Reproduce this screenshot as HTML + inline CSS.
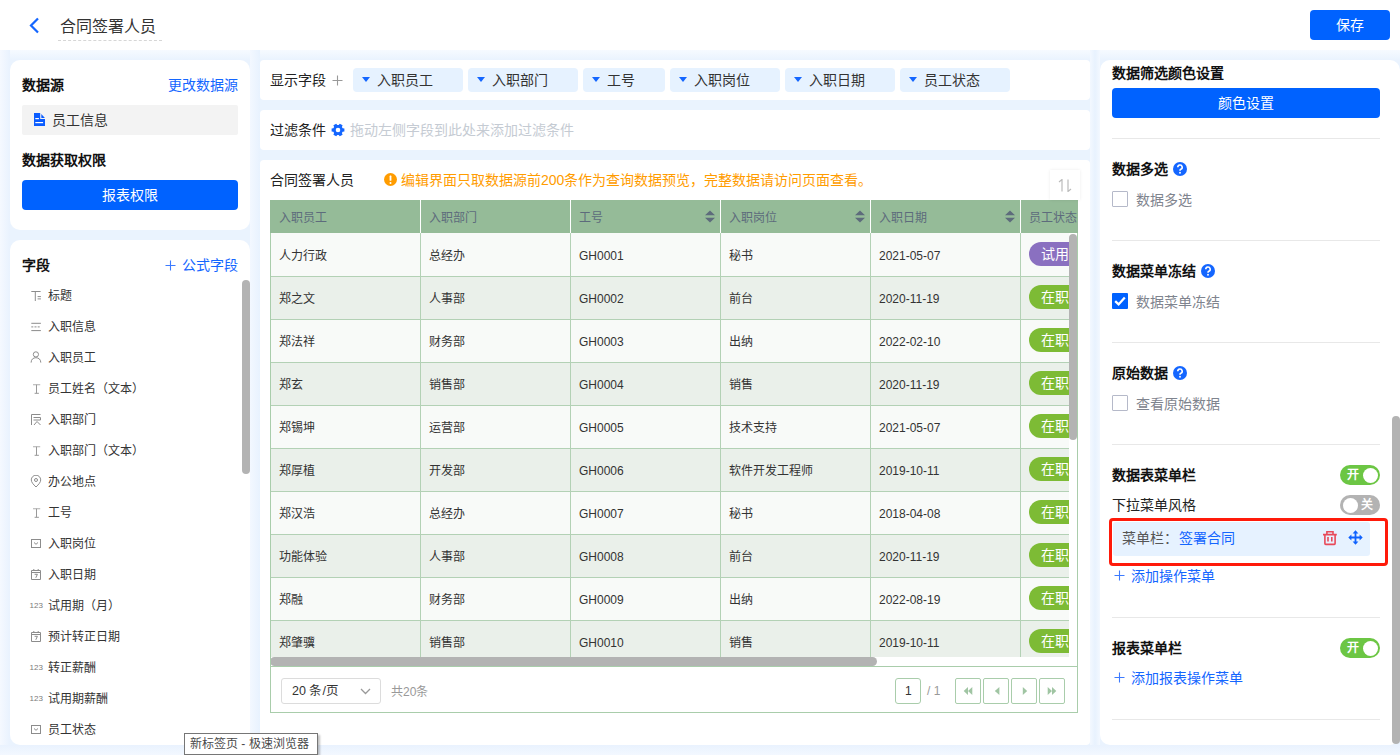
<!DOCTYPE html>
<html lang="zh-CN"><head><meta charset="utf-8">
<style>
*{box-sizing:border-box;margin:0;padding:0}
html,body{width:1400px;height:755px;overflow:hidden}
body{font-family:"Liberation Sans",sans-serif;font-size:14px;color:#222;background:#eaf3fe;position:relative}
.abs{position:absolute}
.hdr{left:0;top:0;width:1400px;height:50px;background:#fff}
.card{background:#fff;border-radius:10px}
.t{position:absolute;white-space:nowrap;line-height:1}
.b{font-weight:bold;color:#111}
.blue{color:#1466ff}
.btn{position:absolute;background:#0062ff;color:#fff;border-radius:4px;text-align:center;font-size:14px}
</style></head><body>

<!-- header -->
<div class="abs hdr">
  <svg class="abs" style="left:28px;top:17px" width="13" height="17" viewBox="0 0 13 17"><path d="M10 1.5 L3 8.5 L10 15.5" fill="none" stroke="#1466ff" stroke-width="2.2"/></svg>
  <div class="t" style="left:60px;top:19px;font-size:16px;color:#333">合同签署人员</div>
  <div class="abs" style="left:58px;top:40px;width:104px;border-top:1px dashed #d6d6d6"></div>
  <div class="btn" style="left:1310px;top:10px;width:80px;height:30px;line-height:30px">保存</div>
</div>

<div class="abs" style="left:0;top:50px;width:1400px;height:10px;background:linear-gradient(#f6faff,#eaf3fe)"></div>
<div class="abs" style="left:0;top:50px;width:10px;height:705px;background:linear-gradient(to right,#f5f9ff,#e9f2fe)"></div>
<div class="abs" style="left:250px;top:50px;width:10px;height:705px;background:linear-gradient(to right,#f3f8ff,#e8f2fe)"></div>
<div class="abs" style="left:1090px;top:50px;width:10px;height:705px;background:linear-gradient(to right,#f3f8ff,#e8f2fe 50%,#f3f8ff)"></div>
<div class="abs" style="left:0;top:745px;width:1400px;height:10px;background:linear-gradient(#e9f2fe,#f3f8ff)"></div>
<!-- left card 1 -->
<div class="abs card" style="left:10px;top:60px;width:240px;height:170px"></div>
<div class="t b" style="left:22px;top:78px">数据源</div>
<div class="t blue" style="left:168px;top:78px">更改数据源</div>
<div class="abs" style="left:22px;top:105px;width:216px;height:30px;background:#f3f3f3;border-radius:2px"></div>
<svg class="abs" style="left:34px;top:113px" width="11" height="13" viewBox="0 0 11 13"><path d="M0 0H6.2V6.1H11V13H0Z" fill="#0a5cff"/><path d="M7.3 1L10.9 5.1H7.3Z" fill="#0a5cff"/><rect x="1.3" y="5" width="3.6" height="1.2" fill="#fff"/><rect x="1.3" y="9" width="7.8" height="1.2" fill="#fff"/></svg>
<div class="t" style="left:52px;top:113px;color:#333">员工信息</div>
<div class="t b" style="left:22px;top:153px">数据获取权限</div>
<div class="btn" style="left:22px;top:180px;width:216px;height:30px;line-height:30px">报表权限</div>

<!-- left card 2 -->
<div class="abs card" style="left:10px;top:240px;width:240px;height:505px"></div>
<div class="t b" style="left:22px;top:258px">字段</div>
<svg class="abs" style="left:164.5px;top:259.5px" width="11" height="11" viewBox="0 0 11 11"><path d="M5.5 0.5V10.5M0.5 5.5H10.5" stroke="#3d7bff" stroke-width="1.1"/></svg>
<div class="t blue" style="left:182px;top:258px">公式字段</div>
<div class="abs" style="left:242px;top:280px;width:8px;height:194px;background:#b3b3b3;border-radius:4px"></div>
<svg class="abs" style="left:30px;top:289px" width="12" height="12" viewBox="0 0 12 12"><path d="M1.3 2.5H10.6M5.3 2.5V12M7.6 7.6H10.9M7.6 9.9H10.9" stroke="#8c8c8c" stroke-width="1" fill="none"/></svg>
<div class="t" style="left:48px;top:290px;font-size:12px;color:#333">标题</div>
<svg class="abs" style="left:30px;top:320px" width="12" height="12" viewBox="0 0 12 12"><path d="M1.3 3.3H10.9M1.3 10.6H10.9" stroke="#8c8c8c" stroke-width="1" fill="none"/><path d="M1.3 6.9H10.9" stroke="#8c8c8c" stroke-width="1" stroke-dasharray="2 1.2" fill="none"/></svg>
<div class="t" style="left:48px;top:321px;font-size:12px;color:#333">入职信息</div>
<svg class="abs" style="left:30px;top:351px" width="12" height="12" viewBox="0 0 12 12"><circle cx="5.9" cy="3.4" r="2.6" stroke="#8c8c8c" fill="none"/><path d="M1.1 11.6C1.1 8.4 3.2 6.7 5.9 6.7S10.8 8.4 10.8 11.6" stroke="#8c8c8c" fill="none"/></svg>
<div class="t" style="left:48px;top:352px;font-size:12px;color:#333">入职员工</div>
<svg class="abs" style="left:30px;top:382px" width="12" height="12" viewBox="0 0 12 12"><path d="M3 2.7H10.2" stroke="#bbb" stroke-width="1.2" fill="none"/><path d="M6.5 2.7V11.3M4.6 11.3H8.9" stroke="#999" fill="none"/></svg>
<div class="t" style="left:48px;top:383px;font-size:12px;color:#333">员工姓名（文本）</div>
<svg class="abs" style="left:30px;top:413px" width="12" height="12" viewBox="0 0 12 12"><path d="M1.5 1.5H10.5M1.5 1.5V12M3.5 4.5H10.5V7H3.5M4 12L7 8.5L10.5 12" stroke="#8c8c8c" fill="none"/></svg>
<div class="t" style="left:48px;top:414px;font-size:12px;color:#333">入职部门</div>
<svg class="abs" style="left:30px;top:444px" width="12" height="12" viewBox="0 0 12 12"><path d="M3 2.7H10.2" stroke="#bbb" stroke-width="1.2" fill="none"/><path d="M6.5 2.7V11.3M4.6 11.3H8.9" stroke="#999" fill="none"/></svg>
<div class="t" style="left:48px;top:445px;font-size:12px;color:#333">入职部门（文本）</div>
<svg class="abs" style="left:30px;top:475px" width="12" height="12" viewBox="0 0 12 12"><path d="M6 12C3.2 9.3 1.3 7.2 1.3 4.9A4.7 4.7 0 0 1 10.7 4.9C10.7 7.2 8.8 9.3 6 12Z" stroke="#8c8c8c" fill="none"/><circle cx="6" cy="5" r="1.5" stroke="#8c8c8c" fill="none"/></svg>
<div class="t" style="left:48px;top:476px;font-size:12px;color:#333">办公地点</div>
<svg class="abs" style="left:30px;top:506px" width="12" height="12" viewBox="0 0 12 12"><path d="M3 2.7H10.2" stroke="#bbb" stroke-width="1.2" fill="none"/><path d="M6.5 2.7V11.3M4.6 11.3H8.9" stroke="#999" fill="none"/></svg>
<div class="t" style="left:48px;top:507px;font-size:12px;color:#333">工号</div>
<svg class="abs" style="left:30px;top:537px" width="12" height="12" viewBox="0 0 12 12"><rect x="1.5" y="2.5" width="9" height="8" stroke="#8c8c8c" fill="none"/><path d="M4 5.5L6 7.3L8 5.5" stroke="#8c8c8c" fill="none"/></svg>
<div class="t" style="left:48px;top:538px;font-size:12px;color:#333">入职岗位</div>
<svg class="abs" style="left:30px;top:568px" width="12" height="12" viewBox="0 0 12 12"><path d="M1.5 2.5H10.5V11.5H1.5ZM1.5 4.5H10.5M3.8 1V3M8.2 1V3M4.6 6.3H7.4L5.8 9.8" stroke="#8c8c8c" fill="none"/></svg>
<div class="t" style="left:48px;top:569px;font-size:12px;color:#333">入职日期</div>
<div class="t" style="left:29.5px;top:601.5px;font-size:8px;color:#7a7a7a">123</div>
<div class="t" style="left:48px;top:600px;font-size:12px;color:#333">试用期（月）</div>
<svg class="abs" style="left:30px;top:630px" width="12" height="12" viewBox="0 0 12 12"><path d="M1.5 2.5H10.5V11.5H1.5ZM1.5 4.5H10.5M3.8 1V3M8.2 1V3M4.6 6.3H7.4L5.8 9.8" stroke="#8c8c8c" fill="none"/></svg>
<div class="t" style="left:48px;top:631px;font-size:12px;color:#333">预计转正日期</div>
<div class="t" style="left:29.5px;top:663.5px;font-size:8px;color:#7a7a7a">123</div>
<div class="t" style="left:48px;top:662px;font-size:12px;color:#333">转正薪酬</div>
<div class="t" style="left:29.5px;top:694.5px;font-size:8px;color:#7a7a7a">123</div>
<div class="t" style="left:48px;top:693px;font-size:12px;color:#333">试用期薪酬</div>
<svg class="abs" style="left:30px;top:723px" width="12" height="12" viewBox="0 0 12 12"><rect x="1.5" y="2.5" width="9" height="8" stroke="#8c8c8c" fill="none"/><path d="M4 5.5L6 7.3L8 5.5" stroke="#8c8c8c" fill="none"/></svg>
<div class="t" style="left:48px;top:724px;font-size:12px;color:#333">员工状态</div>

<!-- middle -->
<div class="abs card" style="left:260px;top:60px;width:830px;height:40px;border-radius:4px"></div>
<div class="t" style="left:270px;top:73px">显示字段</div>
<svg class="abs" style="left:331.5px;top:75px" width="11" height="11" viewBox="0 0 11 11"><path d="M5.5 0.5V10.5M0.5 5.5H10.5" stroke="#999" stroke-width="1.1"/></svg>
<div class="abs" style="left:353px;top:68px;width:110px;height:24px;background:#e6f2ff;border-radius:4px"></div>
<svg class="abs" style="left:362px;top:77px" width="8" height="5" viewBox="0 0 8 5"><path d="M0 0H8L4 5Z" fill="#1466ff"/></svg>
<div class="t" style="left:377px;top:73px;color:#333">入职员工</div>
<div class="abs" style="left:468px;top:68px;width:110px;height:24px;background:#e6f2ff;border-radius:4px"></div>
<svg class="abs" style="left:477px;top:77px" width="8" height="5" viewBox="0 0 8 5"><path d="M0 0H8L4 5Z" fill="#1466ff"/></svg>
<div class="t" style="left:492px;top:73px;color:#333">入职部门</div>
<div class="abs" style="left:583px;top:68px;width:82px;height:24px;background:#e6f2ff;border-radius:4px"></div>
<svg class="abs" style="left:592px;top:77px" width="8" height="5" viewBox="0 0 8 5"><path d="M0 0H8L4 5Z" fill="#1466ff"/></svg>
<div class="t" style="left:607px;top:73px;color:#333">工号</div>
<div class="abs" style="left:670px;top:68px;width:110px;height:24px;background:#e6f2ff;border-radius:4px"></div>
<svg class="abs" style="left:679px;top:77px" width="8" height="5" viewBox="0 0 8 5"><path d="M0 0H8L4 5Z" fill="#1466ff"/></svg>
<div class="t" style="left:694px;top:73px;color:#333">入职岗位</div>
<div class="abs" style="left:785px;top:68px;width:110px;height:24px;background:#e6f2ff;border-radius:4px"></div>
<svg class="abs" style="left:794px;top:77px" width="8" height="5" viewBox="0 0 8 5"><path d="M0 0H8L4 5Z" fill="#1466ff"/></svg>
<div class="t" style="left:809px;top:73px;color:#333">入职日期</div>
<div class="abs" style="left:900px;top:68px;width:110px;height:24px;background:#e6f2ff;border-radius:4px"></div>
<svg class="abs" style="left:909px;top:77px" width="8" height="5" viewBox="0 0 8 5"><path d="M0 0H8L4 5Z" fill="#1466ff"/></svg>
<div class="t" style="left:924px;top:73px;color:#333">员工状态</div>

<div class="abs card" style="left:260px;top:110px;width:830px;height:40px;border-radius:4px"></div>
<div class="t" style="left:270px;top:123px">过滤条件</div>
<svg class="abs" style="left:330.6px;top:123px" width="14" height="14" viewBox="0 0 14 14"><path d="M11.64 5.13 L13.40 5.40 L13.40 8.60 L11.64 8.87 L10.94 10.08 L11.58 11.75 L8.82 13.34 L7.70 11.95 L6.30 11.95 L5.18 13.34 L2.42 11.75 L3.06 10.08 L2.36 8.87 L0.60 8.60 L0.60 5.40 L2.36 5.13 L3.06 3.92 L2.42 2.25 L5.18 0.66 L6.30 2.05 L7.70 2.05 L8.82 0.66 L11.58 2.25 L10.94 3.92Z M9.3 7 A2.3 2.3 0 1 0 4.7 7 A2.3 2.3 0 1 0 9.3 7Z" fill="#1466ff" fill-rule="evenodd"/></svg>
<div class="t" style="left:350px;top:123px;color:#c5cbd3">拖动左侧字段到此处来添加过滤条件</div>

<div class="abs card" style="left:260px;top:160px;width:830px;height:585px;border-radius:4px"></div>
<div class="t" style="left:270px;top:173px">合同签署人员</div>
<svg class="abs" style="left:384px;top:173px" width="13" height="13" viewBox="0 0 13 13"><circle cx="6.5" cy="6.5" r="6.5" fill="#ff9c00"/><rect x="5.6" y="2.6" width="1.8" height="5.2" rx="0.6" fill="#fff"/><circle cx="6.5" cy="9.9" r="1" fill="#fff"/></svg>
<div class="t" style="left:401px;top:173px;color:#ff9c00">编辑界面只取数据源前200条作为查询数据预览，完整数据请访问页面查看。</div>

<div class="abs" style="left:270px;top:200px;width:808px;height:466px;overflow:hidden">
<div class="abs" style="left:0;top:0;width:808px;height:33px;background:#95bb98"></div>
<div class="t" style="left:9px;top:12px;font-size:12px;color:#5d6b7c">入职员工</div>
<div class="abs" style="left:150px;top:0;width:1px;height:33px;background:#fff"></div>
<div class="t" style="left:159px;top:12px;font-size:12px;color:#5d6b7c">入职部门</div>
<div class="abs" style="left:300px;top:0;width:1px;height:33px;background:#fff"></div>
<div class="t" style="left:309px;top:12px;font-size:12px;color:#5d6b7c">工号</div>
<svg class="abs" style="left:435px;top:10px" width="10" height="13" viewBox="0 0 10 13"><path d="M0 5.2L5 0.5L10 5.2Z M0 7.8L5 12.5L10 7.8Z" fill="#5d6b7c"/></svg>
<div class="abs" style="left:450px;top:0;width:1px;height:33px;background:#fff"></div>
<div class="t" style="left:459px;top:12px;font-size:12px;color:#5d6b7c">入职岗位</div>
<svg class="abs" style="left:585px;top:10px" width="10" height="13" viewBox="0 0 10 13"><path d="M0 5.2L5 0.5L10 5.2Z M0 7.8L5 12.5L10 7.8Z" fill="#5d6b7c"/></svg>
<div class="abs" style="left:600px;top:0;width:1px;height:33px;background:#fff"></div>
<div class="t" style="left:609px;top:12px;font-size:12px;color:#5d6b7c">入职日期</div>
<svg class="abs" style="left:735px;top:10px" width="10" height="13" viewBox="0 0 10 13"><path d="M0 5.2L5 0.5L10 5.2Z M0 7.8L5 12.5L10 7.8Z" fill="#5d6b7c"/></svg>
<div class="abs" style="left:750px;top:0;width:1px;height:33px;background:#fff"></div>
<div class="t" style="left:759px;top:12px;font-size:12px;color:#5d6b7c">员工状态</div>
<div class="abs" style="left:0;top:33px;width:799px;height:44px;background:#f8faf8;border-bottom:1px solid #b3d1b5"></div>
<div class="t" style="left:9px;top:50px;font-size:12px;color:#333">人力行政</div>
<div class="t" style="left:159px;top:50px;font-size:12px;color:#333">总经办</div>
<div class="t" style="left:309px;top:50px;font-size:12px;color:#333">GH0001</div>
<div class="t" style="left:459px;top:50px;font-size:12px;color:#333">秘书</div>
<div class="t" style="left:609px;top:50px;font-size:12px;color:#333">2021-05-07</div>
<div class="abs" style="left:759px;top:42px;width:70px;height:24px;border-radius:12px;background:#8a70c0"></div>
<div class="t" style="left:771px;top:47px;font-size:14px;color:#fff">试用期</div>
<div class="abs" style="left:0;top:77px;width:799px;height:43px;background:#eaf0ea;border-bottom:1px solid #b3d1b5"></div>
<div class="t" style="left:9px;top:93px;font-size:12px;color:#333">郑之文</div>
<div class="t" style="left:159px;top:93px;font-size:12px;color:#333">人事部</div>
<div class="t" style="left:309px;top:93px;font-size:12px;color:#333">GH0002</div>
<div class="t" style="left:459px;top:93px;font-size:12px;color:#333">前台</div>
<div class="t" style="left:609px;top:93px;font-size:12px;color:#333">2020-11-19</div>
<div class="abs" style="left:759px;top:85px;width:70px;height:24px;border-radius:12px;background:#7dbb35"></div>
<div class="t" style="left:771px;top:90px;font-size:14px;color:#fff">在职</div>
<div class="abs" style="left:0;top:120px;width:799px;height:43px;background:#f8faf8;border-bottom:1px solid #b3d1b5"></div>
<div class="t" style="left:9px;top:136px;font-size:12px;color:#333">郑法祥</div>
<div class="t" style="left:159px;top:136px;font-size:12px;color:#333">财务部</div>
<div class="t" style="left:309px;top:136px;font-size:12px;color:#333">GH0003</div>
<div class="t" style="left:459px;top:136px;font-size:12px;color:#333">出纳</div>
<div class="t" style="left:609px;top:136px;font-size:12px;color:#333">2022-02-10</div>
<div class="abs" style="left:759px;top:128px;width:70px;height:24px;border-radius:12px;background:#7dbb35"></div>
<div class="t" style="left:771px;top:133px;font-size:14px;color:#fff">在职</div>
<div class="abs" style="left:0;top:163px;width:799px;height:43px;background:#eaf0ea;border-bottom:1px solid #b3d1b5"></div>
<div class="t" style="left:9px;top:179px;font-size:12px;color:#333">郑玄</div>
<div class="t" style="left:159px;top:179px;font-size:12px;color:#333">销售部</div>
<div class="t" style="left:309px;top:179px;font-size:12px;color:#333">GH0004</div>
<div class="t" style="left:459px;top:179px;font-size:12px;color:#333">销售</div>
<div class="t" style="left:609px;top:179px;font-size:12px;color:#333">2020-11-19</div>
<div class="abs" style="left:759px;top:171px;width:70px;height:24px;border-radius:12px;background:#7dbb35"></div>
<div class="t" style="left:771px;top:176px;font-size:14px;color:#fff">在职</div>
<div class="abs" style="left:0;top:206px;width:799px;height:43px;background:#f8faf8;border-bottom:1px solid #b3d1b5"></div>
<div class="t" style="left:9px;top:222px;font-size:12px;color:#333">郑锡坤</div>
<div class="t" style="left:159px;top:222px;font-size:12px;color:#333">运营部</div>
<div class="t" style="left:309px;top:222px;font-size:12px;color:#333">GH0005</div>
<div class="t" style="left:459px;top:222px;font-size:12px;color:#333">技术支持</div>
<div class="t" style="left:609px;top:222px;font-size:12px;color:#333">2021-05-07</div>
<div class="abs" style="left:759px;top:214px;width:70px;height:24px;border-radius:12px;background:#7dbb35"></div>
<div class="t" style="left:771px;top:219px;font-size:14px;color:#fff">在职</div>
<div class="abs" style="left:0;top:249px;width:799px;height:43px;background:#eaf0ea;border-bottom:1px solid #b3d1b5"></div>
<div class="t" style="left:9px;top:265px;font-size:12px;color:#333">郑厚植</div>
<div class="t" style="left:159px;top:265px;font-size:12px;color:#333">开发部</div>
<div class="t" style="left:309px;top:265px;font-size:12px;color:#333">GH0006</div>
<div class="t" style="left:459px;top:265px;font-size:12px;color:#333">软件开发工程师</div>
<div class="t" style="left:609px;top:265px;font-size:12px;color:#333">2019-10-11</div>
<div class="abs" style="left:759px;top:257px;width:70px;height:24px;border-radius:12px;background:#7dbb35"></div>
<div class="t" style="left:771px;top:262px;font-size:14px;color:#fff">在职</div>
<div class="abs" style="left:0;top:292px;width:799px;height:43px;background:#f8faf8;border-bottom:1px solid #b3d1b5"></div>
<div class="t" style="left:9px;top:308px;font-size:12px;color:#333">郑汉浩</div>
<div class="t" style="left:159px;top:308px;font-size:12px;color:#333">总经办</div>
<div class="t" style="left:309px;top:308px;font-size:12px;color:#333">GH0007</div>
<div class="t" style="left:459px;top:308px;font-size:12px;color:#333">秘书</div>
<div class="t" style="left:609px;top:308px;font-size:12px;color:#333">2018-04-08</div>
<div class="abs" style="left:759px;top:300px;width:70px;height:24px;border-radius:12px;background:#7dbb35"></div>
<div class="t" style="left:771px;top:305px;font-size:14px;color:#fff">在职</div>
<div class="abs" style="left:0;top:335px;width:799px;height:43px;background:#eaf0ea;border-bottom:1px solid #b3d1b5"></div>
<div class="t" style="left:9px;top:351px;font-size:12px;color:#333">功能体验</div>
<div class="t" style="left:159px;top:351px;font-size:12px;color:#333">人事部</div>
<div class="t" style="left:309px;top:351px;font-size:12px;color:#333">GH0008</div>
<div class="t" style="left:459px;top:351px;font-size:12px;color:#333">前台</div>
<div class="t" style="left:609px;top:351px;font-size:12px;color:#333">2020-11-19</div>
<div class="abs" style="left:759px;top:343px;width:70px;height:24px;border-radius:12px;background:#7dbb35"></div>
<div class="t" style="left:771px;top:348px;font-size:14px;color:#fff">在职</div>
<div class="abs" style="left:0;top:378px;width:799px;height:43px;background:#f8faf8;border-bottom:1px solid #b3d1b5"></div>
<div class="t" style="left:9px;top:394px;font-size:12px;color:#333">郑融</div>
<div class="t" style="left:159px;top:394px;font-size:12px;color:#333">财务部</div>
<div class="t" style="left:309px;top:394px;font-size:12px;color:#333">GH0009</div>
<div class="t" style="left:459px;top:394px;font-size:12px;color:#333">出纳</div>
<div class="t" style="left:609px;top:394px;font-size:12px;color:#333">2022-08-19</div>
<div class="abs" style="left:759px;top:386px;width:70px;height:24px;border-radius:12px;background:#7dbb35"></div>
<div class="t" style="left:771px;top:391px;font-size:14px;color:#fff">在职</div>
<div class="abs" style="left:0;top:421px;width:799px;height:43px;background:#eaf0ea;border-bottom:1px solid #b3d1b5"></div>
<div class="t" style="left:9px;top:437px;font-size:12px;color:#333">郑肇骥</div>
<div class="t" style="left:159px;top:437px;font-size:12px;color:#333">销售部</div>
<div class="t" style="left:309px;top:437px;font-size:12px;color:#333">GH0010</div>
<div class="t" style="left:459px;top:437px;font-size:12px;color:#333">销售</div>
<div class="t" style="left:609px;top:437px;font-size:12px;color:#333">2019-10-11</div>
<div class="abs" style="left:759px;top:429px;width:70px;height:24px;border-radius:12px;background:#7dbb35"></div>
<div class="t" style="left:771px;top:434px;font-size:14px;color:#fff">在职</div>
<div class="abs" style="left:150px;top:33px;width:1px;height:433px;background:#b3d1b5"></div>
<div class="abs" style="left:300px;top:33px;width:1px;height:433px;background:#b3d1b5"></div>
<div class="abs" style="left:450px;top:33px;width:1px;height:433px;background:#b3d1b5"></div>
<div class="abs" style="left:600px;top:33px;width:1px;height:433px;background:#b3d1b5"></div>
<div class="abs" style="left:750px;top:33px;width:1px;height:433px;background:#b3d1b5"></div>
<div class="abs" style="left:799px;top:33px;width:9px;height:433px;background:#fff"></div>
<div class="abs" style="left:799px;top:34px;width:8px;height:206px;background:#b3b3b3;border-radius:4px"></div>
<div class="abs" style="left:0;top:457px;width:808px;height:9px;background:#fff"></div>
<div class="abs" style="left:0;top:457px;width:607px;height:9px;background:#b3b3b3;border-radius:5px"></div>
</div>
<div class="abs" style="left:270px;top:233px;width:808px;height:480px;border:1px solid #a9cdab;border-top:none"></div>
<div class="abs" style="left:270px;top:666px;width:808px;height:1px;background:#a9cdab"></div>
<div class="abs" style="left:281px;top:678px;width:100px;height:26px;border:1px solid #dcdcdc;border-radius:3px"></div>
<div class="t" style="left:292px;top:685px;font-size:12.5px;color:#333">20 条/页</div>
<svg class="abs" style="left:360px;top:688px" width="11" height="7" viewBox="0 0 11 7"><path d="M1 1L5.5 5.5L10 1" fill="none" stroke="#999" stroke-width="1.3"/></svg>
<div class="t" style="left:391px;top:686px;font-size:12px;color:#999">共20条</div>
<div class="abs" style="left:895px;top:678px;width:26px;height:26px;border:1px solid #a9cdab;border-radius:3px"></div>
<div class="t" style="left:905px;top:685px;font-size:12px;color:#333">1</div>
<div class="t" style="left:927px;top:685px;font-size:12px;color:#999">/ 1</div>
<div class="abs" style="left:955px;top:678px;width:26px;height:26px;border:1px solid #a9cdab;border-radius:2px"></div>
<svg class="abs" style="left:961px;top:683px" width="14" height="16" viewBox="0 0 12 16"><path d="M10.3 4L6 8L10.3 12ZM6 4L1.7 8L6 12Z" fill="#a0c5a3"/></svg>
<div class="abs" style="left:983px;top:678px;width:26px;height:26px;border:1px solid #a9cdab;border-radius:2px"></div>
<svg class="abs" style="left:989px;top:683px" width="14" height="16" viewBox="0 0 12 16"><path d="M9.4 4L4.8 8L9.4 12Z" fill="#a0c5a3"/></svg>
<div class="abs" style="left:1011px;top:678px;width:26px;height:26px;border:1px solid #a9cdab;border-radius:2px"></div>
<svg class="abs" style="left:1017px;top:683px" width="14" height="16" viewBox="0 0 12 16"><path d="M4.8 4L9.2 8L4.8 12Z" fill="#a0c5a3"/></svg>
<div class="abs" style="left:1039px;top:678px;width:26px;height:26px;border:1px solid #a9cdab;border-radius:2px"></div>
<svg class="abs" style="left:1045px;top:683px" width="14" height="16" viewBox="0 0 12 16"><path d="M1.7 4L6 8L1.7 12ZM6 4L10.3 8L6 12Z" fill="#a0c5a3"/></svg>
<div class="abs" style="left:1050px;top:170px;width:30px;height:30px;background:#fff;box-shadow:0 0 3px rgba(0,0,0,0.08)"></div>
<svg class="abs" style="left:1058px;top:179px" width="14" height="13" viewBox="0 0 14 13"><path d="M1 3L4 0.5V12.5M13 10L10 12.5V0.5" fill="none" stroke="#bbb" stroke-width="1.2"/></svg>

<!-- right card -->
<div class="abs card" style="left:1100px;top:60px;width:300px;height:685px"></div>
<div class="t b" style="left:1112px;top:66px">数据筛选颜色设置</div>
<div class="btn" style="left:1112px;top:88px;width:268px;height:30px;line-height:30px">颜色设置</div>
<div class="abs" style="left:1112px;top:138px;width:268px;height:1px;background:#e8e8e8"></div>
<div class="t b" style="left:1112px;top:162px">数据多选</div>
<svg class="abs" style="left:1173px;top:162px" width="14" height="14" viewBox="0 0 14 14"><circle cx="7" cy="7" r="7" fill="#1466ff"/><path d="M4.8 5.3A2.2 2.2 0 1 1 7.8 7.3C7.2 7.6 7 8 7 8.8" stroke="#fff" stroke-width="1.6" fill="none"/><circle cx="7" cy="10.8" r="0.95" fill="#fff"/></svg>
<div class="abs" style="left:1112px;top:191px;width:16px;height:16px;border:1px solid #b5b9c9;border-radius:1px"></div>
<div class="t" style="left:1136px;top:193px;color:#7f848e">数据多选</div>
<div class="abs" style="left:1112px;top:240px;width:268px;height:1px;background:#e8e8e8"></div>
<div class="t b" style="left:1112px;top:264px">数据菜单冻结</div>
<svg class="abs" style="left:1201px;top:264px" width="14" height="14" viewBox="0 0 14 14"><circle cx="7" cy="7" r="7" fill="#1466ff"/><path d="M4.8 5.3A2.2 2.2 0 1 1 7.8 7.3C7.2 7.6 7 8 7 8.8" stroke="#fff" stroke-width="1.6" fill="none"/><circle cx="7" cy="10.8" r="0.95" fill="#fff"/></svg>
<svg class="abs" style="left:1112px;top:293px" width="16" height="16" viewBox="0 0 16 16"><rect width="16" height="16" rx="1" fill="#0062ff"/><path d="M3.2 8.2L6.6 11.4L12.8 4.6" stroke="#fff" stroke-width="2.3" fill="none"/></svg>
<div class="t" style="left:1136px;top:295px;color:#7f848e">数据菜单冻结</div>
<div class="abs" style="left:1112px;top:342px;width:268px;height:1px;background:#e8e8e8"></div>
<div class="t b" style="left:1112px;top:366px">原始数据</div>
<svg class="abs" style="left:1173px;top:366px" width="14" height="14" viewBox="0 0 14 14"><circle cx="7" cy="7" r="7" fill="#1466ff"/><path d="M4.8 5.3A2.2 2.2 0 1 1 7.8 7.3C7.2 7.6 7 8 7 8.8" stroke="#fff" stroke-width="1.6" fill="none"/><circle cx="7" cy="10.8" r="0.95" fill="#fff"/></svg>
<div class="abs" style="left:1112px;top:395px;width:16px;height:16px;border:1px solid #b5b9c9;border-radius:1px"></div>
<div class="t" style="left:1136px;top:397px;color:#7f848e">查看原始数据</div>
<div class="abs" style="left:1112px;top:444px;width:268px;height:1px;background:#e8e8e8"></div>
<div class="t b" style="left:1112px;top:468px">数据表菜单栏</div>
<div class="abs" style="left:1340px;top:465px;width:40px;height:20px;border-radius:10px;background:#6cc644"></div>
<div class="abs" style="left:1362.5px;top:467.5px;width:15px;height:15px;border-radius:8px;background:#fff"></div>
<div class="t b" style="left:1346.5px;top:469px;font-size:12px;color:#fff">开</div>
<div class="t" style="left:1112px;top:498px">下拉菜单风格</div>
<div class="abs" style="left:1340px;top:495px;width:40px;height:20px;border-radius:10px;background:#b3b3b3"></div>
<div class="abs" style="left:1342.5px;top:497.5px;width:15px;height:15px;border-radius:8px;background:#fff"></div>
<div class="t b" style="left:1361px;top:499px;font-size:12px;color:#fff">关</div>
<div class="abs" style="left:1109px;top:518px;width:279px;height:48px;border:3px solid #ff1a0a;border-radius:4px"></div>
<div class="abs" style="left:1113px;top:522px;width:257px;height:34px;background:#e6f2ff;border-radius:3px"></div>
<div class="t" style="left:1122px;top:531px;color:#555">菜单栏：</div>
<div class="t blue" style="left:1179px;top:531px">签署合同</div>
<svg class="abs" style="left:1322px;top:530px" width="16" height="16" viewBox="0 0 16 16"><path d="M4.9 4.2V1.8H11V4.2M1 4.6H14.8M2.9 4.6V13.6Q2.9 14.4 3.7 14.4H12.3Q13.1 14.4 13.1 13.6V4.6M6 7V11.5M9.8 7V11.5" stroke="#e84a5a" stroke-width="1.6" fill="none"/></svg>
<svg class="abs" style="left:1348px;top:530px" width="15" height="15" viewBox="0 0 15 15"><path d="M7.5 2V13M2 7.5H13" stroke="#0f62fe" stroke-width="1.8"/><path d="M7.5 0.3L10.4 3.4H4.6ZM7.5 14.7L10.4 11.6H4.6ZM0.3 7.5L3.4 4.6V10.4ZM14.7 7.5L11.6 4.6V10.4Z" fill="#0f62fe"/></svg>
<svg class="abs" style="left:1113.5px;top:570px" width="11" height="11" viewBox="0 0 11 11"><path d="M5.5 0.5V10.5M0.5 5.5H10.5" stroke="#3d7bff" stroke-width="1.1"/></svg>
<div class="t blue" style="left:1131px;top:569px">添加操作菜单</div>
<div class="abs" style="left:1112px;top:617px;width:268px;height:1px;background:#e8e8e8"></div>
<div class="t b" style="left:1112px;top:641px">报表菜单栏</div>
<div class="abs" style="left:1340px;top:638px;width:40px;height:20px;border-radius:10px;background:#6cc644"></div>
<div class="abs" style="left:1362.5px;top:640.5px;width:15px;height:15px;border-radius:8px;background:#fff"></div>
<div class="t b" style="left:1346.5px;top:642px;font-size:12px;color:#fff">开</div>
<svg class="abs" style="left:1113.5px;top:672px" width="11" height="11" viewBox="0 0 11 11"><path d="M5.5 0.5V10.5M0.5 5.5H10.5" stroke="#3d7bff" stroke-width="1.1"/></svg>
<div class="t blue" style="left:1131px;top:671px">添加报表操作菜单</div>
<div class="abs" style="left:1112px;top:719px;width:268px;height:1px;background:#e8e8e8"></div>
<div class="abs" style="left:1392px;top:416px;width:8px;height:328px;background:#b3b3b3;border-radius:4px 4px 4px 4px"></div>
<div class="abs" style="left:184px;top:733px;width:134px;height:22px;background:#fff;border:1px solid #767676;box-shadow:2px 2px 2px rgba(0,0,0,0.25)"></div>
<div class="t" style="left:190px;top:738px;font-size:12px;color:#4a4a4a">新标签页 - 极速浏览器</div>

</body></html>
